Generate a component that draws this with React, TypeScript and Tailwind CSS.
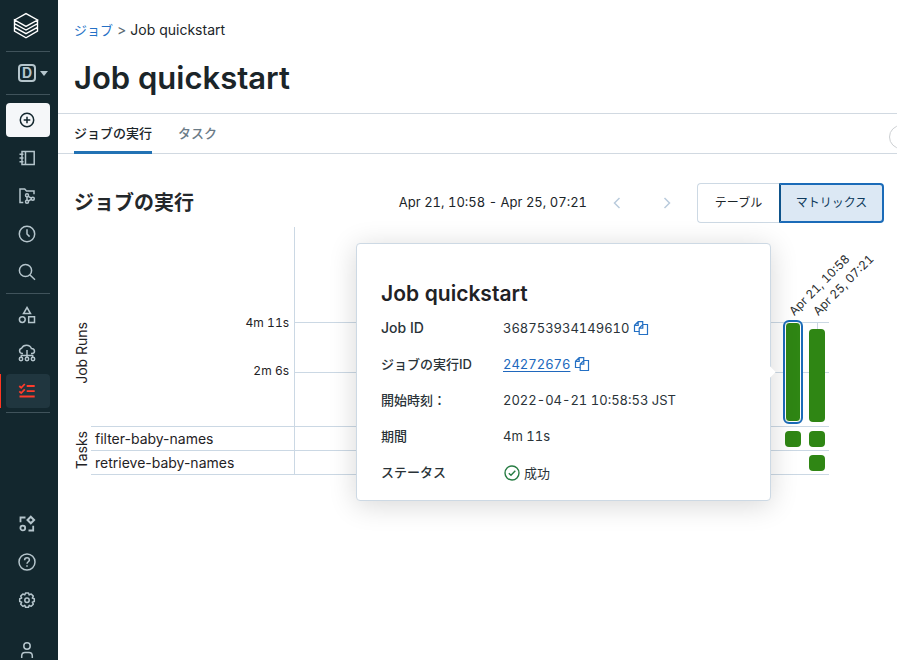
import type { ReactNode } from "react";

const fontStack =
  "font-['Inter','Noto_Sans_CJK_JP',sans-serif]";

function Icon({ children, className = "size-[18px]" }: { children: ReactNode; className?: string }) {
  return (
    <svg
      viewBox="0 0 18 18"
      className={className}
      fill="none"
      stroke="currentColor"
      strokeWidth="1.5"
      aria-hidden="true"
    >
      {children}
    </svg>
  );
}

const LogoIcon = () => (
  <svg viewBox="0 0 26 28" className="h-7 w-[26px]" fill="none" stroke="currentColor" strokeWidth="1.4" strokeLinejoin="miter" aria-hidden="true">
    <path d="M1.5 8 13 1.6 24.5 8 13 14.4 1.5 8v3.6L13 18l11.500-6.400v3.700L13 21.700 1.500 15.300v3.700L13 25.800l11.500-6.800v-3.700M24.500 8v3.600M1.500 11.600v3.700" />
  </svg>
);

const PlusIcon = () => (
  <Icon>
    <circle cx="9" cy="9" r="6.700" />
    <path d="M9 5.700v6.600M5.700 9h6.600" />
  </Icon>
);
const NotebookIcon = () => (
  <Icon>
    <path d="M4 2.500h12.200v13H4zM7.500 2.500v13M1.500 5.200h4M1.500 9h4M1.500 12.800h4" />
  </Icon>
);
const RepoIcon = () => (
  <Icon>
    <path d="M5.300 15.500H2V1.900h4.700l1.800 2H16v3.300" />
    <circle cx="9" cy="8.300" r="1.500" />
    <circle cx="9" cy="14.800" r="1.500" />
    <circle cx="14.800" cy="11.700" r="1.500" />
    <path d="M9 9.800v3.500M10.200 9.300l3.200 1.900M10.200 14l3-1.600" />
  </Icon>
);
const ClockIcon = () => (
  <Icon>
    <circle cx="9" cy="9" r="7.700" />
    <path d="M9 4.200V9l2.600 2.600" />
  </Icon>
);
const SearchIcon = () => (
  <Icon>
    <circle cx="7.500" cy="7.500" r="6.100" />
    <path d="m12 12 5 4.800" />
  </Icon>
);
const ShapesIcon = () => (
  <Icon>
    <path d="m9 1.500 3.500 6h-7zM10.700 10.700h5.800v5.800h-5.800z" />
    <circle cx="4.300" cy="13.600" r="2.900" />
  </Icon>
);
const CloudIcon = () => (
  <Icon>
    <path d="M5 9.500H4A2.700 2.700 0 0 1 3.600 4.200C4.500 2.200 6.200 1.200 8.500 1.200c2.500 0 4.200 1.200 4.900 3.300 2 .1 3.100 1.200 3.100 2.700S15.300 9.500 13.700 9.500H13M9 6v7.300M3.300 13.300v-1.700h11.400v1.700" />
    <circle cx="3" cy="15" r="1.700" />
    <circle cx="9" cy="15" r="1.700" />
    <circle cx="15" cy="15" r="1.700" />
  </Icon>
);
const JobsIcon = () => (
  <Icon>
    <path d="m1.300 4 1.900 1.800L6.800 2M1.300 9.300l1.900 1.800 3.600-3.800M8.700 4h8M8.700 9.200h8M1.500 14.500h15.200" strokeWidth="1.800" />
  </Icon>
);
const PartnerIcon = () => (
  <Icon>
    <path d="M7.500 2.500H2.500v4.700M10.500 15.500h4.700v-4.700" strokeWidth="1.800" />
    <circle cx="4.800" cy="13" r="2.400" strokeWidth="1.800" />
    <path d="m12.800 1.700 3.300 3.300-3.300 3.300L9.500 5z" strokeWidth="2" />
  </Icon>
);
const HelpIcon = () => (
  <Icon>
    <circle cx="9" cy="9" r="8" />
    <path d="M6.600 7.200c0-1.500 1-2.400 2.400-2.400s2.400.9 2.400 2.200c0 1.700-2.400 1.800-2.400 3.700" />
    <path d="M9 12.200v1.500" />
  </Icon>
);
const GearIcon = () => (
  <Icon>
    <path d="m6.800 3.900.7-2h3l.7 2 2-.9 2.100 2.100-1 1.900 2 .7v2.800l-2 .7 1 2-2.100 2.100-2-1-.7 2h-3l-.7-2-2 1-2.100-2.100 1-2-2-.7V7.700l2-.7-1-1.900L4.800 3z" strokeLinejoin="round" />
    <circle cx="9" cy="9.200" r="2.200" />
  </Icon>
);
const UserIcon = () => (
  <Icon>
    <circle cx="9" cy="5" r="3.200" />
    <path d="M3.700 17v-2c0-2 1.300-3.500 3.300-3.500h4c2 0 3.300 1.500 3.300 3.500v2" />
  </Icon>
);
const CopyIcon = () => (
  <svg viewBox="0 0 16 16" className="size-4" fill="none" stroke="currentColor" strokeWidth="1.200" aria-hidden="true">
    <path d="M6.200 11.500H1.500V5.300l3.700-3.700h4.500v3M5.200 1.600v3.700H1.500" />
    <path d="M9.800 4.500h4.700v10H6.200V8.100zM9.800 4.500v3.600H6.200" />
  </svg>
);
const SuccessIcon = () => (
  <svg viewBox="0 0 16 16" className="size-4" fill="none" stroke="currentColor" strokeWidth="1.400" aria-hidden="true">
    <circle cx="8" cy="8" r="7" />
    <path d="m4.800 8.200 2.200 2.100 4.300-4.500" />
  </svg>
);

function NavButton({ label, children, tone = "text-[#b5c5cc]" }: { label: string; children: ReactNode; tone?: string }) {
  return (
    <button aria-label={label} className={`flex h-[34px] shrink-0 items-center justify-center rounded pr-0.5 ${tone}`}>
      {children}
    </button>
  );
}

const Divider = () => <div className="h-px shrink-0 bg-[#40535b]" />;

function Sidebar() {
  return (
    <nav className="sticky top-0 flex h-screen w-[58px] shrink-0 flex-col overflow-hidden bg-[#13272e] pl-1.5 pr-2">
      <div className="flex h-[51px] shrink-0 items-center justify-center pr-1 text-white">
        <LogoIcon />
      </div>
      <Divider />
      <button aria-label="Workspace" className="flex h-[42px] shrink-0 items-center justify-end gap-1 pr-0.5 text-[#b5c5cc]">
        <span className="flex size-[18px] items-center justify-center rounded border-2 border-current text-sm font-bold leading-none">D</span>
        <svg viewBox="0 0 8 5" className="h-[5px] w-2" fill="currentColor" aria-hidden="true">
          <path d="M0 0h8L4 5z" />
        </svg>
      </button>
      <Divider />
      <div className="flex flex-col gap-1 pb-1 pt-2">
        <NavButton label="Create" tone="bg-[#f5f7f9] text-[#13272e]"><PlusIcon /></NavButton>
        <NavButton label="Workspace files"><NotebookIcon /></NavButton>
        <NavButton label="Repos"><RepoIcon /></NavButton>
        <NavButton label="Recents"><ClockIcon /></NavButton>
        <NavButton label="Search"><SearchIcon /></NavButton>
      </div>
      <Divider />
      <div className="flex flex-col gap-1 py-1">
        <NavButton label="Data"><ShapesIcon /></NavButton>
        <NavButton label="Compute"><CloudIcon /></NavButton>
        <div className="relative flex flex-col">
          <span className="absolute -left-1.5 h-full w-px bg-[#ff3621]" />
          <NavButton label="Jobs" tone="bg-[#20363f] text-[#ff3b2b]"><JobsIcon /></NavButton>
        </div>
      </div>
      <Divider />
      <div className="mt-auto flex flex-col gap-1">
        <NavButton label="Partner Connect"><PartnerIcon /></NavButton>
        <NavButton label="Help"><HelpIcon /></NavButton>
        <NavButton label="Settings"><GearIcon /></NavButton>
        <button aria-label="Account" className="mt-3 flex h-[27px] justify-center pr-0.5 pt-2 text-[#b5c5cc]"><UserIcon /></button>
      </div>
    </nav>
  );
}

function Detail({ label, children }: { label: ReactNode; children: ReactNode }) {
  return (
    <div className="flex h-9 items-center">
      <dt className="w-[122px] shrink-0 font-medium">{label}</dt>
      <dd className="flex items-center gap-1">{children}</dd>
    </div>
  );
}

function RunPopover() {
  return (
    <div
      role="dialog"
      aria-label="Job quickstart"
      className="absolute right-full top-1/2 z-10 mr-3.5 w-[415px] -translate-y-1/2 rounded border border-[#cdd9e4] bg-white px-6 pb-2.5 pt-[33px] text-[13px] tabular-nums text-[#2a3338] shadow-[0_4px_28px_rgba(0,0,0,0.16)]"
    >
      <span className="absolute -right-1 top-1/2 size-2 -translate-y-1/2 rotate-45 bg-white" />
      <h3 className="text-[21px] font-semibold leading-[33px] text-[#1f2225]">Job quickstart</h3>
      <dl>
        <Detail label={<span className="text-sm">Job ID</span>}>
          368753934149610
          <button aria-label="Copy job ID" className="text-[#2470c4]"><CopyIcon /></button>
        </Detail>
        <Detail label="ジョブの実行ID">
          <a href="#run" className="text-[#2068bd] underline underline-offset-2">24272676</a>
          <button aria-label="Copy run ID" className="text-[#2470c4]"><CopyIcon /></button>
        </Detail>
        <Detail label="開始時刻：">2022-04-21 10:58:53 JST</Detail>
        <Detail label="期間">4m 11s</Detail>
        <Detail label="ステータス">
          <span className="flex items-center gap-1 pl-px pt-0.5">
            <span className="text-[#277c43]"><SuccessIcon /></span>
            <span>成功</span>
          </span>
        </Detail>
      </dl>
    </div>
  );
}

const RunDate = ({ children }: { children: ReactNode }) => (
  <span className="absolute bottom-full left-1/2 mb-[3px] ml-1 origin-bottom-left -rotate-45 whitespace-nowrap text-xs tabular-nums text-[#2a2d30]">
    {children}
  </span>
);

function Matrix() {
  return (
    <div className="mr-[55px] mt-1 grid grid-cols-[17px_203px_1fr] text-sm text-[#1f2225]">
      <div className="flex h-[199px] items-end pb-[42px]">
        <span className="rotate-180 leading-4 [writing-mode:vertical-rl]">Job Runs</span>
      </div>
      <div className="flex h-[199px] flex-col items-end pr-[5px] pt-[72px] text-xs tabular-nums">
        <span className="flex h-12 items-center">4m 11s</span>
        <span className="flex h-12 items-center">2m 6s</span>
      </div>
      <div className="relative flex h-[199px] flex-col border-l border-[#cbd8e4] pt-[95px]">
        <div className="h-[50px] border-t border-[#cbd8e4]" />
        <div className="border-t border-[#cbd8e4]" />
        <div className="absolute inset-y-0 right-0 flex items-end pb-1">
          <div className="flex w-6 justify-center">
            <div className="relative">
              <RunDate>Apr 21, 10:58</RunDate>
              <button aria-label="Apr 21, 10:58" className="block h-[100px] w-4 rounded border border-white bg-[#2f8614] outline-2 outline-[#1b6bb8]" />
              <RunPopover />
            </div>
          </div>
          <div className="flex w-6 justify-center">
            <div className="relative pt-[7px]">
              <RunDate>Apr 25, 07:21</RunDate>
              <span className="absolute left-1/2 top-0 h-[7px] w-px bg-[#cbd8e4]" />
              <button aria-label="Apr 25, 07:21" className="block h-[93px] w-4 rounded bg-[#2f8614]" />
            </div>
          </div>
        </div>
      </div>

      <div className="row-span-2 flex items-center">
        <span className="rotate-180 leading-4 [writing-mode:vertical-rl]">Tasks</span>
      </div>
      <div className="flex h-6 items-center border-t border-[#cbd8e4] pl-1">filter-baby-names</div>
      <div className="flex h-6 items-center justify-end border-l border-t border-[#cbd8e4]">
        <span className="flex w-6 justify-center"><button aria-label="filter-baby-names, Apr 21" className="size-4 rounded bg-[#2f8614]" /></span>
        <span className="flex w-6 justify-center"><button aria-label="filter-baby-names, Apr 25" className="size-4 rounded bg-[#2f8614]" /></span>
      </div>
      <div className="flex h-[25px] items-center border-y border-[#cbd8e4] pl-1">retrieve-baby-names</div>
      <div className="flex h-[25px] items-center justify-end border-y border-l border-[#cbd8e4]">
        <span className="flex w-6 justify-center"><button aria-label="retrieve-baby-names, Apr 25" className="size-4 rounded bg-[#2f8614]" /></span>
      </div>
    </div>
  );
}

const Chevron = ({ d }: { d: string }) => (
  <svg viewBox="0 0 8 12" className="h-3 w-2" fill="none" stroke="currentColor" strokeWidth="1.500" aria-hidden="true">
    <path d={d} />
  </svg>
);

export default function App() {
  return (
    <div className={`flex min-h-screen bg-white text-[#1b2529] ${fontStack}`}>
      <Sidebar />
      <main className="min-w-0 flex-1 overflow-hidden">
        <header className="px-4 pt-5">
          <div className="flex h-5 items-center gap-1 text-sm">
            <a href="#jobs" className="text-[13px] text-[#2571c6]">ジョブ</a>
            <span className="text-[#5c6b74]">&gt;</span>
            <span>Job quickstart</span>
          </div>
          <h1 className="mt-[18px] pb-[15px] text-[31px] font-semibold leading-10">Job quickstart</h1>
        </header>
        <div className="flex h-[41px] items-stretch justify-between border-y border-[#d1d9e1] pl-4">
          <div role="tablist" className="-mb-px flex gap-[26px] text-[13px] font-medium">
            <button role="tab" aria-selected="true" className="border-b-[3px] border-[#2272b4] pt-0.5">ジョブの実行</button>
            <button role="tab" aria-selected="false" className="border-b-[3px] border-transparent pt-0.5 text-[#6b7b87]">タスク</button>
          </div>
          <button aria-label="More" className="-mr-4 mb-1 size-6 self-end rounded-full border border-[#cccfd2]" />
        </div>
        <section className="pl-4 pr-[13px]">
          <div className="mt-[29px] flex h-10 items-center">
            <h2 className="text-xl font-semibold text-[#24282b]">ジョブの実行</h2>
            <span className="ml-auto text-[13px] tabular-nums">Apr 21, 10:58 - Apr 25, 07:21</span>
            <div className="mx-[26px] flex gap-[42px] text-[#b9cbdc]">
              <button aria-label="Previous"><Chevron d="M6.500 1 1.500 6l5 5" /></button>
              <button aria-label="Next"><Chevron d="m1.500 1 5 5-5 5" /></button>
            </div>
            <div className="flex h-10 text-xs">
              <button className="w-[82px] rounded-l border border-r-0 border-[#cdd9e4]">テーブル</button>
              <button className="w-[105px] rounded-r border-2 border-[#1b6bb8] border-l-[#0e538b] bg-[#dce8f4] text-[#0e3a5c]">マトリックス</button>
            </div>
          </div>
          <Matrix />
        </section>
      </main>
    </div>
  );
}
